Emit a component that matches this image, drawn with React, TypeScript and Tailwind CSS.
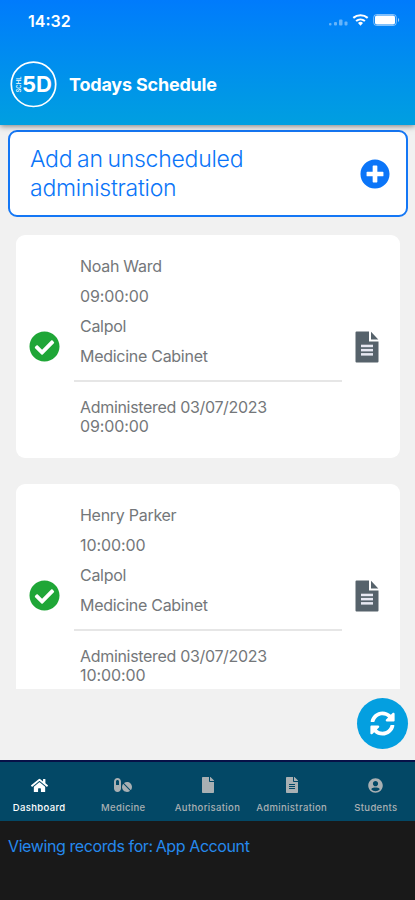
import React from "react";
import {
  FaCheckCircle,
  FaFile,
  FaFileAlt,
  FaHome,
  FaPills,
  FaPlusCircle,
  FaSyncAlt,
  FaUserCircle,
} from "react-icons/fa";

const records = [
  {
    name: "Noah Ward",
    time: "09:00:00",
    medicine: "Calpol",
    location: "Medicine Cabinet",
    date: "03/07/2023",
  },
  {
    name: "Henry Parker",
    time: "10:00:00",
    medicine: "Calpol",
    location: "Medicine Cabinet",
    date: "03/07/2023",
  },
];

const tabs = [
  { label: "Dashboard", icon: <FaHome size={17} />, active: true },
  { label: "Medicine", icon: <FaPills size={18} /> },
  { label: "Authorisation", icon: <FaFile size={16} /> },
  { label: "Administration", icon: <FaFileAlt size={16} /> },
  { label: "Students", icon: <FaUserCircle size={15} /> },
];

const StatusIcons = () => (
  <svg width="74" height="14" viewBox="0 0 74 14" fill="white">
    <g opacity="0.4">
      <rect x="0" y="10" width="2.500" height="2.500" rx="1" />
      <rect x="5" y="9" width="3" height="3.500" rx="1" />
      <rect x="10" y="6.500" width="3.500" height="6" rx="1" />
      <rect x="15.500" y="8.500" width="3" height="4" rx="1" />
    </g>
    <g fill="none" stroke="white" strokeWidth="2.100">
      <path d="M24.300 4.900a11 11 0 0 1 14.400 0" />
      <path d="M27.100 8a7 7 0 0 1 8.800 0" />
    </g>
    <path d="M31.500 12.800 29 10a3.600 3.600 0 0 1 5 0z" />
    <rect
      x="44.700"
      y="1.500"
      width="22.600"
      height="11"
      rx="3"
      fill="none"
      stroke="white"
      strokeOpacity="0.5"
    />
    <rect x="46" y="2.500" width="20" height="9" rx="1.800" />
    <path d="M69 5v4c1.600-.6 1.600-3.400 0-4z" opacity="0.6" />
  </svg>
);

const Logo = () => (
  <svg width="48" height="48" viewBox="0 0 48 48">
    <circle cx="24.500" cy="24.300" r="22.200" fill="none" stroke="white" strokeWidth="1.700" />
    <g fill="white" fontFamily="Inter, sans-serif">
      <text
        transform="translate(12.300 32.500) rotate(-90)"
        fontSize="6.500"
        fontWeight="500"
        textLength="16"
        lengthAdjust="spacingAndGlyphs"
      >
        SCHL
      </text>
      <text
        x="13"
        y="32"
        fontSize="22"
        fontWeight="700"
        textLength="30"
        lengthAdjust="spacingAndGlyphs"
      >
        5D
      </text>
    </g>
  </svg>
);

const DocumentIcon = () => (
  <svg width="24" height="32" viewBox="0 0 24 32">
    <path
      d="M1.500.5H14v10h9.500V30.500a1 1 0 0 1-1 1h-21a1 1 0 0 1-1-1V1.500a1 1 0 0 1 1-1z"
      fill="#56626b"
    />
    <path d="M16 .8 23.300 8.500H16z" fill="#56626b" />
    <g fill="#e7e8f2">
      <rect x="6" y="13.700" width="12" height="2.500" />
      <rect x="6" y="17.900" width="12" height="2.500" />
      <rect x="6" y="22.100" width="12" height="2.500" />
    </g>
  </svg>
);

type CardProps = { record: (typeof records)[number] };

const RecordCard = ({ record }: CardProps) => (
  <div className="flex h-[223px] shrink-0 items-center rounded-[9px] bg-white text-[#74777a]">
    <div className="w-[58px] shrink-0 pl-[13px]">
      <FaCheckCircle size={31} className="text-[#1fa637]" />
    </div>
    <div className="h-full w-[268px] pt-[16px] text-[16px] leading-[30px] tracking-[-0.28px]">
      <div className="border-b-2 border-[#e6e6e6] pb-[9px] pl-[6px]">
        <p>{record.name}</p>
        <p className="tracking-[-0.1px]">{record.time}</p>
        <p>{record.medicine}</p>
        <p>{record.location}</p>
      </div>
      <p className="pt-[16px] pl-[6px] leading-[19px] tracking-[-0.32px]">
        Administered {record.date}
        <br />
        <span className="tracking-[-0.1px]">{record.time}</span>
      </p>
    </div>
    <div className="pl-[13px]">
      <DocumentIcon />
    </div>
  </div>
);

const App = () => {
  return (
    <div className="flex h-[900px] w-[415px] flex-col overflow-hidden bg-[#f1f1f1] font-[Inter,sans-serif]">
      <header className="z-10 h-[125px] shrink-0 bg-linear-to-b from-[#007bfc] to-[#009fe0] text-white shadow-[0_1px_6px_rgba(0,0,0,0.5)]">
        <div className="flex h-10 items-center justify-between pr-[12px] pl-[28px]">
          <span className="pt-px text-[16px] font-semibold">14:32</span>
          <StatusIcons />
        </div>
        <div className="flex items-center gap-[12px] pt-[20px] pl-[9px]">
          <Logo />
          <h1 className="text-[18px] font-bold tracking-[-0.2px]">Todays Schedule</h1>
        </div>
      </header>

      <main className="flex h-[564px] shrink-0 flex-col overflow-hidden px-2 pt-[5px]">
        <button className="flex h-[87px] w-[400px] shrink-0 items-center justify-between rounded-[9px] border-2 border-[#1477f5] bg-white pr-[16px] pl-[20px] text-left text-[#0b75f8]">
          <span className="w-[240px] text-[23px] leading-[29px] font-light tracking-[-0.25px] [word-spacing:-1.5px]">
            Add an unscheduled administration
          </span>
          <FaPlusCircle size={30} />
        </button>
        <div className="mt-[18px] ml-2 flex w-[384px] flex-col gap-[26px]">
          {records.map((record) => (
            <RecordCard key={record.name} record={record} />
          ))}
        </div>
      </main>

      <div className="flex h-[71px] shrink-0 justify-end pt-[9px] pr-[7px]">
        <button className="flex size-[51px] items-center justify-center rounded-full bg-[#049fe0] text-white">
          <FaSyncAlt size={25} />
        </button>
      </div>

      <nav className="-mx-[3px] flex h-[61px] shrink-0 border-t-2 border-[#071047] bg-[#034866]">
        {tabs.map((tab) => (
          <div
            key={tab.label}
            className={
              tab.active
                ? "flex flex-1 flex-col items-center pt-[14px] text-white"
                : "flex flex-1 flex-col items-center pt-[14px] text-[#a9b0b3]"
            }
          >
            <span className="flex h-[18px] items-center">{tab.icon}</span>
            <span className="mt-[8px] text-[9.500px] leading-[12px] font-medium tracking-[0.35px]">
              {tab.label}
            </span>
          </div>
        ))}
      </nav>

      <footer className="flex flex-1 gap-[3px] bg-[#191919] pt-[15px] pl-2 text-[16px] leading-[20px] tracking-[-0.4px] text-[#2589ed]">
        <span>Viewing records for:</span>
        <span>App Account</span>
      </footer>
    </div>
  );
};

export default App;
